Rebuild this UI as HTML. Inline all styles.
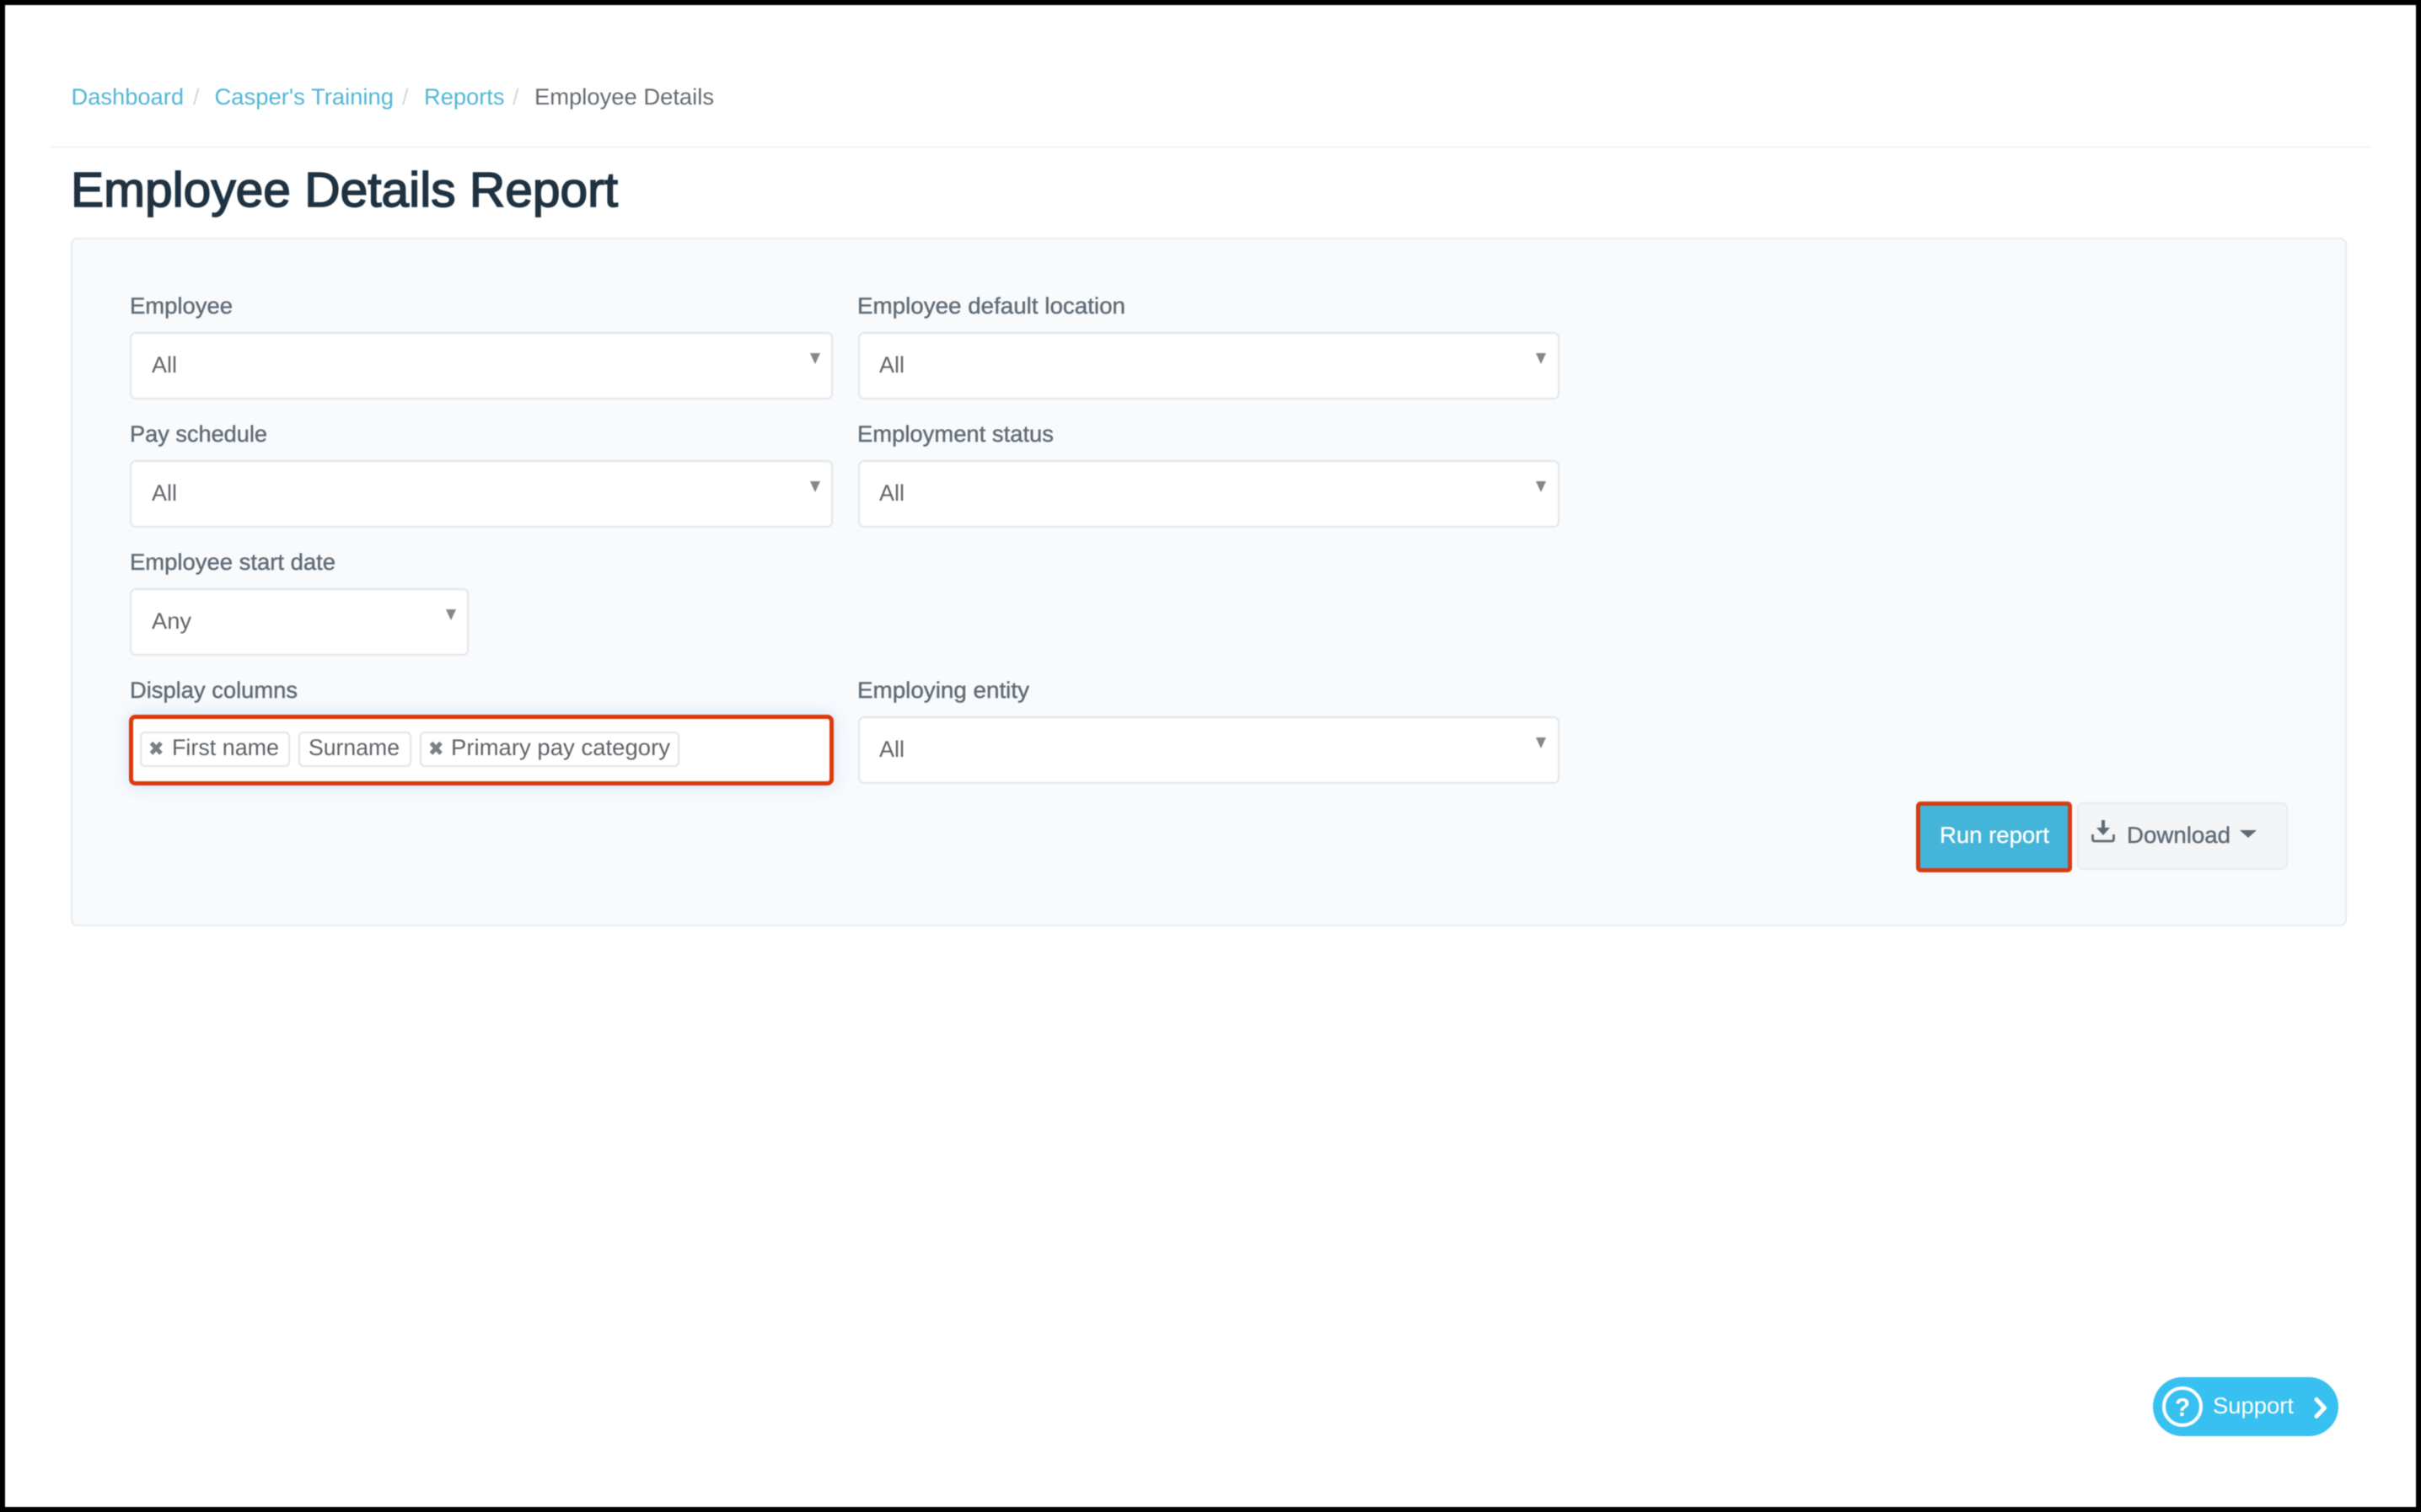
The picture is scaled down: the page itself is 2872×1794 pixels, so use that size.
<!DOCTYPE html>
<html lang="en"><head><meta charset="utf-8"><title>Employee Details Report</title>
<style>
html,body{margin:0;padding:0;background:#000;width:2872px;height:1794px;overflow:hidden}
svg{display:block;filter:blur(.5px)}
text{font-family:"Liberation Sans",Arial,sans-serif;text-rendering:geometricPrecision}
.lb{font-size:27px;fill:#5f6b75;stroke:#5f6b75;stroke-width:.4px}
.v{font-size:27px;fill:#606468}
.bc{font-size:27px;fill:#52b6d6}
.sl{font-size:27px;fill:#d3d8dc}
.sel{fill:#fff;stroke:#e3e8ec;stroke-width:2.2px}
.tag{fill:#fff;stroke:#e3e7eb;stroke-width:2.2px}
.ar{fill:#85888b}
.x{stroke:#7b7e82;stroke-width:5;fill:none}
</style></head><body>
<svg width="2872" height="1794" viewBox="0 0 2872 1794" xmlns="http://www.w3.org/2000/svg" style="position:absolute;left:0;top:0">
<defs><filter id="gl" x="-5%" y="-30%" width="110%" height="160%"><feGaussianBlur stdDeviation="9"/></filter></defs>
<rect x="0" y="0" width="2872" height="1794" fill="#000"/>
<rect x="6" y="6" width="2860" height="1782" fill="#fff"/>

<text class="bc" x="84.500" y="124" textLength="133.500" lengthAdjust="spacingAndGlyphs">Dashboard</text>
<text class="sl" x="229" y="124">/</text>
<text class="bc" x="254.500" y="124" textLength="212.500" lengthAdjust="spacingAndGlyphs">Casper's Training</text>
<text class="sl" x="477" y="124">/</text>
<text class="bc" x="503" y="124" textLength="95.500" lengthAdjust="spacingAndGlyphs">Reports</text>
<text class="sl" x="608" y="124">/</text>
<text x="634" y="124" font-size="27" fill="#666c72" textLength="213" lengthAdjust="spacingAndGlyphs">Employee Details</text>

<rect x="59" y="173.500" width="2754" height="2" fill="#f1f3f5"/>

<text x="84" y="245" font-size="58" fill="#1f3241" stroke="#1f3241" stroke-width="1.600" textLength="649" lengthAdjust="spacingAndGlyphs">Employee Details Report</text>

<rect x="85" y="283" width="2698" height="815" rx="7" fill="#f8fafc" stroke="#e8eef3" stroke-width="2.200"/>

<text class="lb" x="154" y="372" textLength="122" lengthAdjust="spacingAndGlyphs">Employee</text>
<text class="lb" x="1017" y="372" textLength="318" lengthAdjust="spacingAndGlyphs">Employee default location</text>
<text class="lb" x="154" y="524" textLength="163" lengthAdjust="spacingAndGlyphs">Pay schedule</text>
<text class="lb" x="1017" y="524" textLength="233" lengthAdjust="spacingAndGlyphs">Employment status</text>
<text class="lb" x="154" y="676" textLength="244" lengthAdjust="spacingAndGlyphs">Employee start date</text>
<text class="lb" x="154" y="828" textLength="199" lengthAdjust="spacingAndGlyphs">Display columns</text>
<text class="lb" x="1017" y="828" textLength="204" lengthAdjust="spacingAndGlyphs">Employing entity</text>

<rect class="sel" x="155" y="395" width="832" height="78" rx="6"/>
<rect class="sel" x="1019" y="395" width="830" height="78" rx="6"/>
<rect class="sel" x="155" y="547" width="832" height="78" rx="6"/>
<rect class="sel" x="1019" y="547" width="830" height="78" rx="6"/>
<rect class="sel" x="155" y="699" width="400" height="78" rx="6"/>
<rect class="sel" x="1019" y="851" width="830" height="78" rx="6"/>

<text class="v" x="180" y="442" textLength="30" lengthAdjust="spacingAndGlyphs">All</text>
<text class="v" x="1043" y="442" textLength="30" lengthAdjust="spacingAndGlyphs">All</text>
<text class="v" x="180" y="594" textLength="30" lengthAdjust="spacingAndGlyphs">All</text>
<text class="v" x="1043" y="594" textLength="30" lengthAdjust="spacingAndGlyphs">All</text>
<text class="v" x="180" y="746" textLength="47" lengthAdjust="spacingAndGlyphs">Any</text>
<text class="v" x="1043" y="898" textLength="30" lengthAdjust="spacingAndGlyphs">All</text>

<polygon class="ar" points="961,419 973,419 967,432"/>
<polygon class="ar" points="1822,419 1834,419 1828,432"/>
<polygon class="ar" points="961,571 973,571 967,584"/>
<polygon class="ar" points="1822,571 1834,571 1828,584"/>
<polygon class="ar" points="529,723 541,723 535,736"/>
<polygon class="ar" points="1822,875 1834,875 1828,888"/>

<rect x="153" y="848" width="836" height="84" rx="6" fill="#9cc6ee" opacity=".45" filter="url(#gl)"/>
<rect x="155.500" y="850.500" width="831" height="79" rx="5" fill="#fff" stroke="#dc3a0c" stroke-width="5"/>

<rect class="tag" x="167" y="869" width="176" height="40" rx="5"/>
<path class="x" d="M179.500 881.500L191 894M191 881.500L179.500 894"/>
<text class="v" x="204" y="896" textLength="127" lengthAdjust="spacingAndGlyphs">First name</text>
<rect class="tag" x="355" y="869" width="132" height="40" rx="5"/>
<text class="v" x="366" y="896" textLength="108" lengthAdjust="spacingAndGlyphs">Surname</text>
<rect class="tag" x="499" y="869" width="306" height="40" rx="5"/>
<path class="x" d="M511.500 881.500L523 894M523 881.500L511.500 894"/>
<text class="v" x="535" y="896" textLength="260" lengthAdjust="spacingAndGlyphs">Primary pay category</text>

<rect x="2275.500" y="953.500" width="180" height="79" rx="3" fill="#45b4d9" stroke="#d53d12" stroke-width="5"/>
<text x="2301" y="1000" font-size="27" fill="#fff" stroke="#fff" stroke-width=".3" textLength="130" lengthAdjust="spacingAndGlyphs">Run report</text>

<rect x="2465" y="953" width="248" height="78" rx="6" fill="#f3f5f7" stroke="#e8edf2" stroke-width="2.200"/>
<path d="M2482.500 990V995.500Q2482.500 998 2485 998H2505Q2507.500 998 2507.500 995.500V990" fill="none" stroke="#5f6b75" stroke-width="2.800"/>
<path d="M2495 973V985" fill="none" stroke="#5f6b75" stroke-width="4"/>
<polygon points="2487,982 2503,982 2495,991" fill="#5f6b75"/>
<text x="2523" y="1000" font-size="27" fill="#5f6b75" stroke="#5f6b75" stroke-width=".4" textLength="123" lengthAdjust="spacingAndGlyphs">Download</text>
<polygon points="2657,985 2677,985 2667,994" fill="#5f6b75"/>

<rect x="2554" y="1634" width="220" height="70" rx="35" fill="#38c0f0"/>
<circle cx="2589" cy="1669" r="22" fill="none" stroke="#fff" stroke-width="4"/>
<text x="2589" y="1680" font-size="30" font-weight="700" fill="#fff" text-anchor="middle">?</text>
<text x="2625" y="1677" font-size="27" fill="#fff" textLength="96" lengthAdjust="spacingAndGlyphs">Support</text>
<path d="M2748 1660.500L2757.500 1670.500L2748 1680.500" fill="none" stroke="#fff" stroke-width="5" stroke-linecap="round" stroke-linejoin="round"/>
</svg>
</body></html>
